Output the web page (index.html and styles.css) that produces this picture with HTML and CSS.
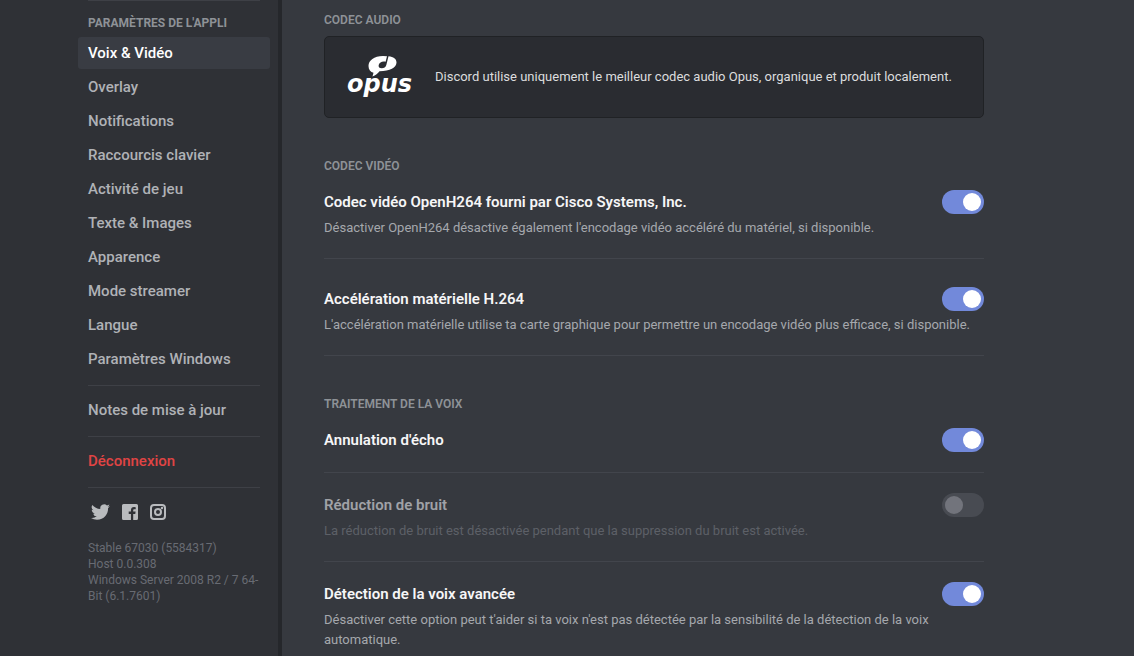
FILE: index.html
```html
<!DOCTYPE html>
<html lang="fr">
<head>
<meta charset="utf-8">
<meta name="viewport" content="width=device-width, initial-scale=1">
<title>Voix &amp; Vidéo</title>
<link rel="stylesheet" href="styles.css">
</head>
<body>
<div class="settings">
  <aside class="sidebar">
    <hr class="sidebar-rule">
    <h2 class="sidebar-heading">Paramètres de l'appli</h2>
    <nav class="nav">
      <a class="nav-item nav-item-active" href="#voix" aria-current="page">Voix &amp; Vidéo</a>
      <a class="nav-item" href="#overlay">Overlay</a>
      <a class="nav-item" href="#notifications">Notifications</a>
      <a class="nav-item" href="#raccourcis">Raccourcis clavier</a>
      <a class="nav-item" href="#activite">Activité de jeu</a>
      <a class="nav-item" href="#texte">Texte &amp; Images</a>
      <a class="nav-item" href="#apparence">Apparence</a>
      <a class="nav-item" href="#streamer">Mode streamer</a>
      <a class="nav-item" href="#langue">Langue</a>
      <a class="nav-item" href="#windows">Paramètres Windows</a>
    </nav>
    <hr class="sidebar-rule sidebar-rule-spaced">
    <a class="nav-item" href="#notes">Notes de mise à jour</a>
    <hr class="sidebar-rule sidebar-rule-spaced">
    <button class="nav-item nav-item-danger" type="button">Déconnexion</button>
    <hr class="sidebar-rule sidebar-rule-spaced">
    <div class="social">
      <a class="social-link" href="#twitter" aria-label="Twitter">
        <svg class="social-icon" viewBox="0 0 24 24"><path d="M23.95 4.57a10 10 0 0 1-2.82.78 4.96 4.96 0 0 0 2.16-2.73c-.95.56-2 .96-3.13 1.19a4.92 4.92 0 0 0-8.38 4.48C7.69 8.1 4.07 6.13 1.64 3.16a4.92 4.92 0 0 0 1.52 6.57 4.9 4.9 0 0 1-2.23-.61v.06c0 2.38 1.7 4.37 3.95 4.82a5 5 0 0 1-2.21.09 4.94 4.94 0 0 0 4.6 3.42A9.87 9.87 0 0 1 0 19.54a14 14 0 0 0 7.55 2.21c9.05 0 14-7.5 14-13.98 0-.21 0-.42-.02-.63a9.94 9.94 0 0 0 2.42-2.57z"/></svg>
      </a>
      <a class="social-link" href="#facebook" aria-label="Facebook">
        <svg class="social-icon social-icon-small" viewBox="0 0 16 16"><path d="M1.500 0h13A1.500 1.500 0 0 1 16 1.500v13a1.500 1.500 0 0 1-1.500 1.500H11.200V9.900h2.100l.3-2.300h-2.400V6.400c0-.75.3-1.200 1.250-1.200H13.700V3.200a14 14 0 0 0-1.700-.1c-1.900 0-3.050 1.100-3.050 3v1.500H6.700v2.300h2.250V16H1.500A1.500 1.500 0 0 1 0 14.500v-13A1.500 1.500 0 0 1 1.500 0z"/></svg>
      </a>
      <a class="social-link" href="#instagram" aria-label="Instagram">
        <svg class="social-icon social-icon-small" viewBox="0 0 16 16"><rect class="icon-line" x="1" y="1" width="14" height="14" rx="3"/><circle class="icon-line" cx="8" cy="8" r="3"/><circle cx="12" cy="4" r="1.200"/></svg>
      </a>
    </div>
    <p class="build">Stable 67030 (5584317)<br>Host 0.0.308<br>Windows Server 2008 R2 / 7 64-<br>Bit (6.1.7601)</p>
  </aside>

  <main class="content">
    <section class="section">
      <h2 class="label">Codec audio</h2>
      <div class="card">
        <svg class="opus" viewBox="0 0 72 44" role="img" aria-label="Opus">
          <path fill-rule="evenodd" d="M38 1C29 1 23.500 5.500 23.500 11c0 3.500 2 6 5 6.800l-1 3.700c3-1.300 5.500-3.300 7-5.300C45 16 51.500 12.500 51.500 7.500c0-3.600-3-5.600-8-6.200l-2.200 8.700c-.6 2.100-2.300 3.300-4.500 3.300-2.400 0-3.600-1.300-3.100-3.300.6-2.300 2.600-3.600 5-3.600.8 0 1.300.1 1.900.4L42 1.200z"/>
          <text class="opus-word" x="2" y="37">opus</text>
        </svg>
        <p class="card-text">Discord utilise uniquement le meilleur codec audio Opus, organique et produit localement.</p>
      </div>
    </section>

    <section class="section">
      <h2 class="label label-rows">Codec vidéo</h2>
      <div class="row row-loose">
        <div class="row-head">
          <label class="row-title" for="openh264">Codec vidéo OpenH264 fourni par Cisco Systems, Inc.</label>
          <input class="switch" type="checkbox" role="switch" id="openh264" checked>
        </div>
        <p class="row-text">Désactiver OpenH264 désactive également l'encodage vidéo accéléré du matériel, si disponible.</p>
      </div>
      <div class="row">
        <div class="row-head">
          <label class="row-title" for="h264">Accélération matérielle H.264</label>
          <input class="switch" type="checkbox" role="switch" id="h264" checked>
        </div>
        <p class="row-text">L'accélération matérielle utilise ta carte graphique pour permettre un encodage vidéo plus efficace, si disponible.</p>
      </div>
    </section>

    <section class="section">
      <h2 class="label label-rows">Traitement de la voix</h2>
      <div class="row">
        <div class="row-head">
          <label class="row-title" for="echo">Annulation d'écho</label>
          <input class="switch" type="checkbox" role="switch" id="echo" checked>
        </div>
      </div>
      <div class="row row-disabled">
        <div class="row-head">
          <label class="row-title" for="bruit">Réduction de bruit</label>
          <input class="switch" type="checkbox" role="switch" id="bruit" disabled>
        </div>
        <p class="row-text">La réduction de bruit est désactivée pendant que la suppression du bruit est activée.</p>
      </div>
      <div class="row">
        <div class="row-head">
          <label class="row-title" for="detection">Détection de la voix avancée</label>
          <input class="switch" type="checkbox" role="switch" id="detection" checked>
        </div>
        <p class="row-text">Désactiver cette option peut t'aider si ta voix n'est pas détectée par la sensibilité de la détection de la voix automatique.</p>
      </div>
    </section>
  </main>
</div>
</body>
</html>
```
FILE: styles.css
```css
* {
  box-sizing: border-box;
}

body {
  margin: 0;
  background: #36393f;
  color: #b9bbbe;
  font-family: Roboto, sans-serif;
  font-size: 13px;
  line-height: 20px;
}

h2,
p {
  margin: 0;
}

.settings {
  display: flex;
  height: 100vh;
  overflow: hidden;
}

.sidebar {
  flex: none;
  padding: 0 8px 0 78px;
  background: #2f3136;
  border-right: 4px solid #25272b;
}

.sidebar-rule {
  height: 1px;
  margin: 0 10px;
  border: 0;
  background: #3e4046;
}

.sidebar-rule-spaced {
  margin-top: 10px;
  margin-bottom: 8px;
}

.sidebar-heading {
  margin: 14px 0 6px;
  padding-left: 10px;
  color: #8e9297;
  font-size: 12px;
  font-weight: 700;
  line-height: 16px;
  text-transform: uppercase;
  white-space: nowrap;
}

.nav {
  display: grid;
  gap: 2px;
}

.nav-item {
  display: block;
  width: 192px;
  padding: 6px 10px;
  border: 0;
  border-radius: 3px;
  background: none;
  color: #b0b2b6;
  font: 500 15px/20px Roboto, sans-serif;
  text-align: left;
  text-decoration: none;
  white-space: nowrap;
}

.nav-item-active {
  background: #393c43;
  color: #fff;
}

.nav-item-danger {
  color: #e04444;
}

.social {
  display: flex;
  gap: 12px;
  align-items: center;
  margin-top: 14px;
  padding-left: 13px;
}

.social-link {
  display: flex;
}

.social-icon {
  width: 19px;
  height: 20px;
  fill: #b9bbbe;
}

.social-icon-small {
  width: 16px;
}

.icon-line {
  fill: none;
  stroke: #b9bbbe;
  stroke-width: 2;
}

.build {
  margin-top: 18px;
  padding-left: 10px;
  color: #686b73;
  font-size: 12px;
  line-height: 16px;
  white-space: nowrap;
}

.content {
  flex: 1;
  min-width: 0;
  max-width: 742px;
  padding: 12px 40px 0 42px;
}

.section {
  margin-bottom: 40px;
}

.label {
  margin-bottom: 8px;
  color: #8e9297;
  font-size: 12px;
  font-weight: 600;
  line-height: 16px;
  text-transform: uppercase;
}

.label-rows {
  margin-bottom: 16px;
}

.card {
  display: flex;
  gap: 18px;
  align-items: center;
  padding: 18px 20px;
  border: 1px solid #202225;
  border-radius: 5px;
  background: #2a2c31;
}

.opus {
  flex: none;
  width: 72px;
  height: 44px;
  fill: #fff;
}

.opus-word {
  font: italic 700 24px "DejaVu Sans", sans-serif;
}

.card-text {
  color: #dcddde;
}

.row {
  margin-bottom: 20px;
  padding-bottom: 20px;
  border-bottom: 1px solid #42454c;
}

.row-loose {
  margin-bottom: 28px;
}

.row-head {
  display: flex;
  gap: 16px;
  align-items: center;
  justify-content: space-between;
}

.row-title {
  color: #f6f6f7;
  font-size: 15px;
  font-weight: 600;
  line-height: 24px;
}

.row-text {
  margin-top: 4px;
  color: #a5a8ad;
}

.row-disabled .row-title {
  color: #a0a2a7;
}

.row-disabled .row-text {
  color: #5d6067;
}

.switch {
  display: flex;
  flex: none;
  align-items: center;
  width: 42px;
  height: 24px;
  margin: 0;
  padding: 0 3px;
  border-radius: 12px;
  background: #484b52;
  appearance: none;
}

.switch::before {
  width: 18px;
  height: 18px;
  border-radius: 50%;
  background: #72747c;
  content: "";
}

.switch:checked {
  justify-content: flex-end;
  background: #7289da;
}

.switch:checked::before {
  background: #fff;
}
```
